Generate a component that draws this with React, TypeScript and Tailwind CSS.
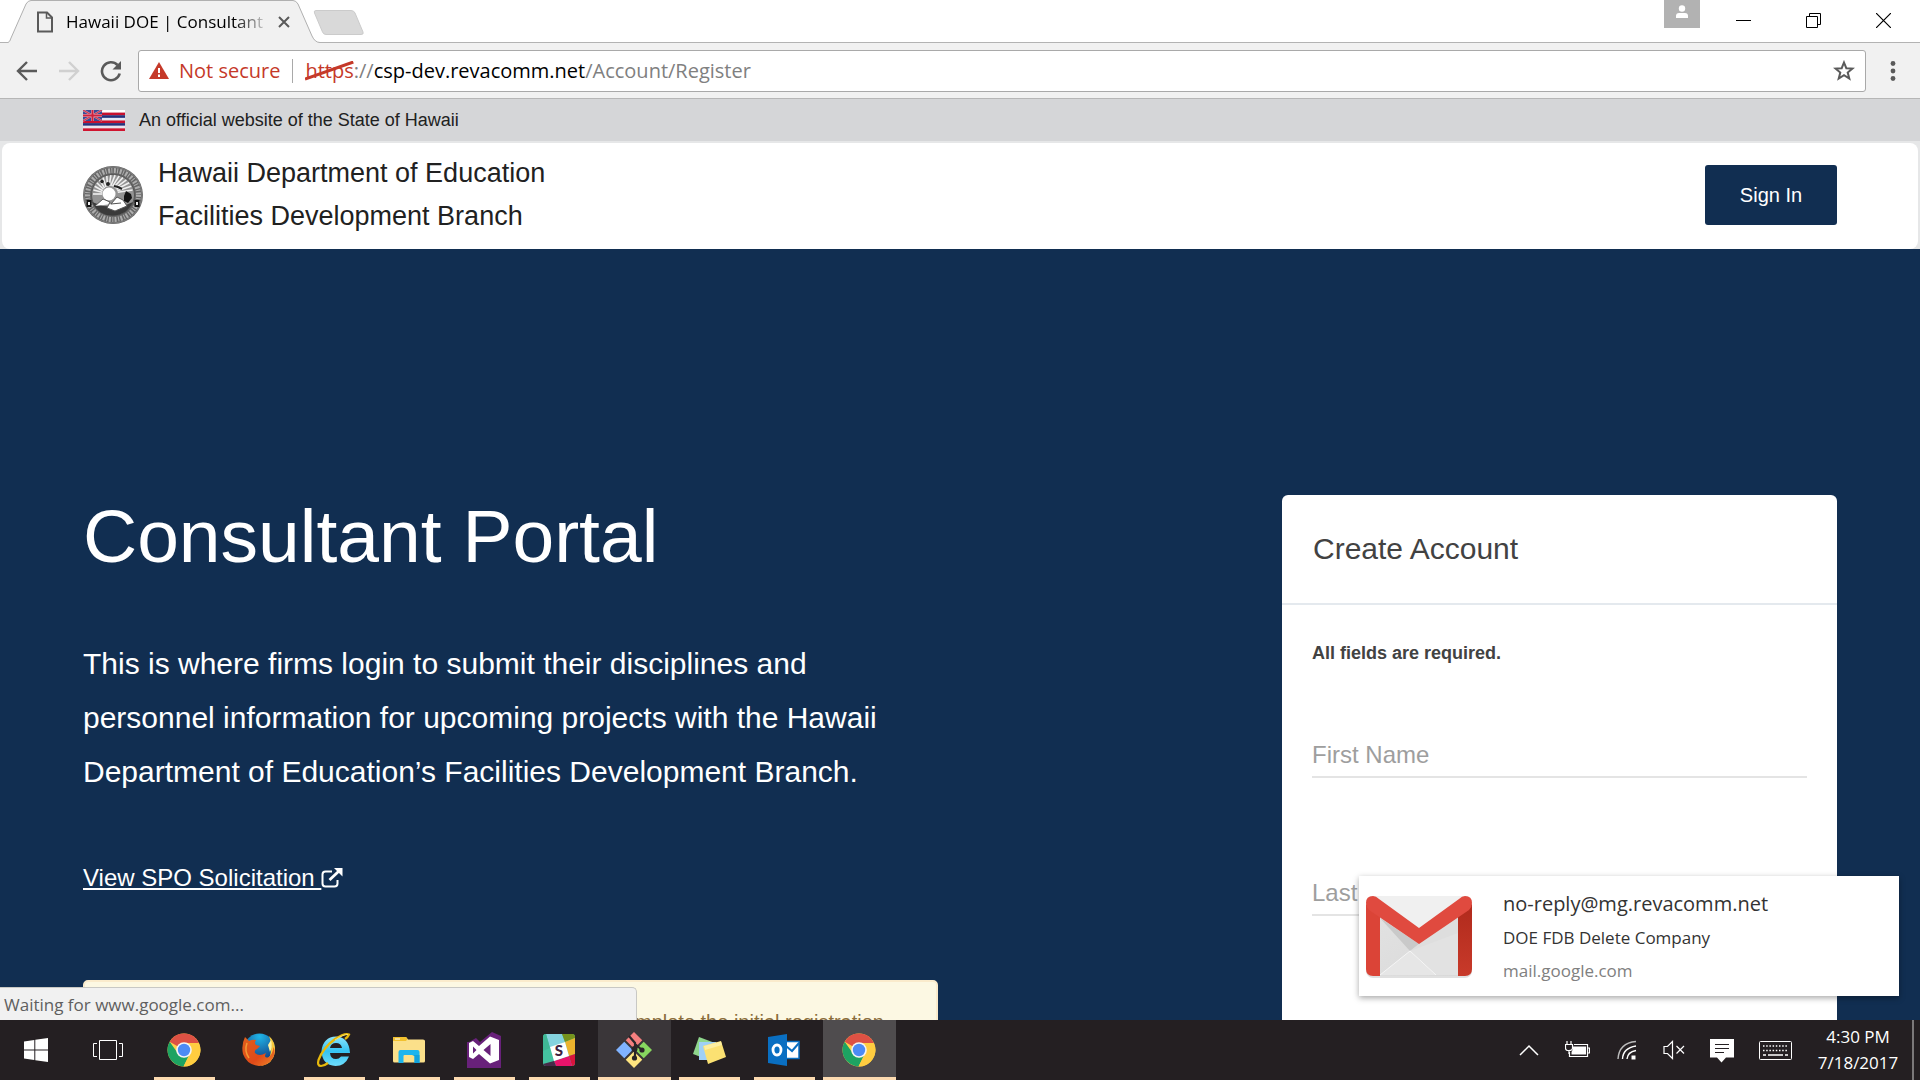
import React from "react";

const ui = "font-['Open_Sans','Noto_Sans',sans-serif]";

function TabStrip() {
  return (
    <div className="flex h-[43px] shrink-0 items-start justify-between bg-white shadow-[inset_0_-1px_0_#b3b3b3]">
      <div className="flex">
        <div className="relative ml-2 flex h-[43px] w-[312px] items-center">
          <svg className="absolute inset-0 h-full w-full" viewBox="0 0 312 43" preserveAspectRatio="none" aria-hidden="true">
            <path d="M0 43V42.5Q2 42 3 38L18 4Q20 .5 23 .5H285Q288 .5 290 4L304 36Q308 42.500 312 42.500V43Z" fill="#f1f1f1" />
            <path d="M0 42.500Q2 42 3 38L18 4Q20 .5 23 .5H285Q288 .5 290 4L304 36Q307 42.500 312 42.500" fill="none" stroke="#b0b0b0" />
          </svg>
          <svg className="relative ml-7 shrink-0" width="18" height="22" viewBox="0 0 18 22" fill="none" stroke="#5a5a5a" strokeWidth="2" aria-hidden="true">
            <path d="M2 1.500H11L16 6.500V20.500H2Z" />
            <path d="M10.500 1.500V7H16" strokeWidth="1.500" />
          </svg>
          <span className="relative ml-3 whitespace-nowrap bg-gradient-to-r from-black from-85% to-black/20 bg-clip-text text-[17px] leading-6 text-transparent">
            Hawaii DOE | Consultant
          </span>
          <button aria-label="Close tab" className="absolute right-[26px] top-3 flex h-5 w-5 items-center justify-center">
            <svg width="12" height="12" viewBox="0 0 12 12" stroke="#5a5a5a" strokeWidth="2" aria-hidden="true">
              <path d="M1 1L11 11M11 1L1 11" />
            </svg>
          </button>
        </div>
        <button aria-label="New tab" className="-ml-2 mt-[9px] h-7">
          <svg width="54" height="28" viewBox="0 0 54 28" aria-hidden="true">
            <path d="M4 1.500H39Q42 1.500 43 4L51 23Q52 25.500 49 25.500H14Q11.500 25.500 10.500 23L2.500 4Q1.500 1.500 4 1.500Z" fill="#d9d9d9" stroke="#cbcbcb" />
          </svg>
        </button>
      </div>
      <div className="flex items-start">
        <button aria-label="Profile" className="flex h-7 w-9 items-start justify-center bg-[#b2b2b2] pt-[5px]">
          <svg width="14" height="14" viewBox="0 0 14 14" fill="#fff" aria-hidden="true">
            <circle cx="7" cy="3.500" r="3.200" />
            <path d="M1 13V11Q1 8 4 8H10Q13 8 13 11V13Z" />
          </svg>
        </button>
        <button aria-label="Minimize" className="ml-2 flex h-[41px] w-[71px] items-center justify-center">
          <svg width="15" height="15" viewBox="0 0 15 15" stroke="#000" aria-hidden="true"><path d="M0 7.500H15" /></svg>
        </button>
        <button aria-label="Restore" className="flex h-[41px] w-[68px] items-center justify-center">
          <svg width="15" height="15" viewBox="0 0 15 15" fill="none" stroke="#000" aria-hidden="true">
            <path d="M.5 3.500H11.500V14.500H.5ZM3.500 3.500V.5H14.500V11.500H11.500" />
          </svg>
        </button>
        <button aria-label="Close" className="flex h-[41px] w-[73px] items-center justify-center">
          <svg width="15" height="15" viewBox="0 0 15 15" stroke="#000" strokeWidth="1.200" aria-hidden="true"><path d="M0 0L15 15M15 0L0 15" /></svg>
        </button>
      </div>
    </div>
  );
}

function Toolbar() {
  return (
    <div className="flex h-14 shrink-0 items-center border-b border-[#b6b6b6] bg-[#f1f1f1] pl-4 pr-6">
      <button aria-label="Back">
        <svg width="22" height="20" viewBox="0 0 22 20" fill="none" stroke="#5a5a5a" strokeWidth="2.400" aria-hidden="true">
          <path d="M21 10H2.500M11 1L2 10L11 19" />
        </svg>
      </button>
      <button aria-label="Forward" disabled className="ml-5">
        <svg width="22" height="20" viewBox="0 0 22 20" fill="none" stroke="#d0d0d0" strokeWidth="2.400" aria-hidden="true">
          <path d="M1 10H19.500M11 1L20 10L11 19" />
        </svg>
      </button>
      <button aria-label="Reload" className="ml-5">
        <svg width="22" height="22" viewBox="0 0 22 22" aria-hidden="true">
          <path d="M17.500 5A9 9 0 1 0 19.700 13.500" fill="none" stroke="#5a5a5a" strokeWidth="2.600" />
          <path d="M21 1V9.500H12.500Z" fill="#5a5a5a" />
        </svg>
      </button>
      <div className="ml-4 flex h-[42px] flex-1 items-center rounded-[3px] border border-[#a9a9a9] bg-white px-[10px] text-xl">
        <svg width="20" height="17" viewBox="0 0 20 17" aria-hidden="true">
          <path d="M10 0L20 17H0Z" fill="#c53929" />
          <path d="M10 6V11M10 12.500V15" stroke="#fff" strokeWidth="2" />
        </svg>
        <span className="ml-2.5 whitespace-nowrap text-[#c53929]">Not secure</span>
        <span className="mx-3 h-6 w-px bg-[#a9a9a9]" />
        <span className="whitespace-nowrap text-[#808080]">
          <span className="relative text-[#c53929]">
            https
            <svg className="absolute left-0 top-1 h-5 w-full" viewBox="0 0 47 20" preserveAspectRatio="none" stroke="#c53929" strokeWidth="3" aria-hidden="true">
              <path d="M0 18L47 1" />
            </svg>
          </span>
          ://<span className="text-black">csp-dev.revacomm.net</span>/Account/Register
        </span>
        <button aria-label="Bookmark this page" className="ml-auto">
          <svg width="22" height="21" viewBox="0 0 22 21" fill="none" stroke="#5a5a5a" strokeWidth="2" aria-hidden="true">
            <path d="M11 2.500L13.300 8.200L19.500 8.600L14.700 12.500L16.300 18.500L11 15.200L5.700 18.500L7.300 12.500L2.500 8.600L8.700 8.200Z" />
          </svg>
        </button>
      </div>
      <button aria-label="Menu" className="ml-6">
        <svg width="6" height="20" viewBox="0 0 6 20" fill="#5a5a5a" aria-hidden="true">
          <circle cx="3" cy="2.500" r="2.400" /><circle cx="3" cy="10" r="2.400" /><circle cx="3" cy="17.500" r="2.400" />
        </svg>
      </button>
    </div>
  );
}

function Flag() {
  const stripes = ["#ffffff", "#c8102e", "#24327c", "#e4e8f4", "#c8102e", "#24327c", "#e9e4ee", "#d0142f"];
  return (
    <svg width="42" height="21" viewBox="0 0 42 21" role="img" aria-label="Flag of Hawaii">
      {stripes.map((c, i) => (
        <rect key={i} x="0" y={i * 2.625} width="42" height="2.700" fill={c} />
      ))}
      <rect width="19" height="11" fill="#3a4a96" />
      <path d="M0 0L19 11M19 0L0 11" stroke="#c9a9c4" strokeWidth="2" />
      <path d="M0 0L19 11M19 0L0 11" stroke="#d03a50" strokeWidth="1.200" />
      <path d="M9.500 0V11M0 5.500H19" stroke="#d9b4c8" strokeWidth="3" />
      <path d="M9.500 0V11M0 5.500H19" stroke="#d0203c" strokeWidth="2" />
    </svg>
  );
}

function Seal() {
  return (
    <svg width="60" height="58" viewBox="0 0 60 58" role="img" aria-label="Department of Education seal">
      <ellipse cx="30" cy="29" rx="30" ry="29" fill="#666" />
      <ellipse cx="30" cy="29" rx="25.500" ry="24.500" fill="none" stroke="#adadad" strokeWidth="5" strokeDasharray="2 1.300 1 1.600" />
      <ellipse cx="30" cy="29" rx="29" ry="28" fill="none" stroke="#808080" strokeWidth="1" />
      <ellipse cx="30" cy="29" rx="21.500" ry="20.500" fill="#949494" stroke="#555" strokeWidth="1" />
      <g stroke="#f0f0f0" strokeWidth="1.600">
        {[180, 192, 204, 216, 228, 240, 252, 264, 276, 288, 300, 312, 324, 336, 348].map((a) => (
          <path key={a} d={`M${(27 + 8 * Math.cos((a * Math.PI) / 180)).toFixed(1)} ${(28 + 8 * Math.sin((a * Math.PI) / 180)).toFixed(1)}L${(30 + 20 * Math.cos((a * Math.PI) / 180)).toFixed(1)} ${(28 + 19 * Math.sin((a * Math.PI) / 180)).toFixed(1)}`} />
        ))}
      </g>
      <circle cx="26" cy="28" r="6.500" fill="#fff" />
      <path d="M9 36Q16 50 30 49.500Q44 49 50 36L38 41L20 40Z" fill="#3a3a3a" />
      <path d="M12 40L20 33L27 36L24 42L32 45L44 40L40 34L34 31L28 38L38 37" fill="#fff" stroke="#555" strokeWidth="1" />
      <path d="M41 30L43 25L48 28L49 32L45 37L41 35Z" fill="#151515" />
      <circle cx="19" cy="15.500" r="1.800" fill="#222" />
      <circle cx="25" cy="18" r="2" fill="#222" />
      <path d="M31 20L35 21L39 23" stroke="#222" strokeWidth="2" />
      <rect x="3.500" y="34" width="5" height="7" fill="#111" /><rect x="5" y="36" width="2" height="3" fill="#eee" />
      <rect x="51.500" y="34" width="5" height="7" fill="#111" /><rect x="53" y="36" width="2" height="3" fill="#eee" />
    </svg>
  );
}

function SiteHeader() {
  return (
    <>
      <div className="flex h-[42px] items-center bg-[#d5d6d8] px-[83px] text-lg text-[#212121]">
        <Flag />
        <span className="ml-3.5">An official website of the State of Hawaii</span>
      </div>
      <header className="bg-[#e6e7e8] px-0.5 pt-0.5">
        <div className="flex h-[106px] items-center justify-between rounded-lg bg-white px-[81px] pb-0.5">
          <div className="flex items-center gap-[15px]">
            <Seal />
            <p className="text-[27px] leading-[43px] text-[#212121]">
              Hawaii Department of Education
              <br />
              Facilities Development Branch
            </p>
          </div>
          <button className="h-[60px] w-[132px] rounded-[3px] bg-[#112e51] text-xl text-white">Sign In</button>
        </div>
      </header>
    </>
  );
}

function Hero() {
  return (
    <main className="flex items-start justify-between bg-[#112e51] px-[83px] pt-[246px]">
      <section className="max-w-[855px] flex-1 text-white">
        <h1 className="text-[75px] leading-[82px]">Consultant Portal</h1>
        <p className="mt-[60px] text-3xl leading-[54px]">
          This is where firms login to submit their disciplines and personnel information for upcoming projects with the Hawaii Department of
          Education’s Facilities Development Branch.
        </p>
        <a href="#solicitation" className="mt-[61px] flex items-center text-2xl leading-9">
          <span className="whitespace-pre underline decoration-2 underline-offset-2">View SPO Solicitation </span>
          <svg width="22" height="20" viewBox="0 0 22 20" fill="none" stroke="#fff" strokeWidth="2" aria-hidden="true">
            <path d="M11 3.500H4.500Q1.500 3.500 1.500 6.500V15.500Q1.500 18.500 4.500 18.500H13.500Q16.500 18.500 16.500 15.500V12" />
            <path d="M8.500 12L18 3" strokeWidth="2.800" />
            <path d="M13 0H21.500V8.500Z" fill="#fff" stroke="none" />
          </svg>
        </a>
        <div role="alert" className="mt-[84px] h-40 rounded-[5px] border-2 border-[#faebcc] bg-[#fcf8e3] px-[52px] pt-[26px] text-right text-xl text-[#8a6d3b]">
          Please complete the initial registration
        </div>
      </section>
      <form className="h-[700px] w-[555px] rounded-md bg-white text-[#424242]">
        <h2 className="border-b-2 border-[#e4e9ee] px-[31px] text-3xl leading-[108px]">Create Account</h2>
        <div className="px-[30px] pt-[34px]">
          <p className="mb-[67px] text-lg font-bold leading-7">All fields are required.</p>
          <input aria-label="First Name" placeholder="First Name" className="mb-[94px] block h-11 w-full border-b-2 border-[#e4e4e4] text-2xl placeholder:text-[#9e9e9e]" />
          <input aria-label="Last Name" placeholder="Last Name" className="block h-11 w-full border-b-2 border-[#e4e4e4] text-2xl placeholder:text-[#9e9e9e]" />
        </div>
      </form>
    </main>
  );
}

function GmailIcon() {
  return (
    <svg width="110" height="86" viewBox="0 0 110 86" aria-hidden="true">
      <defs>
        <linearGradient id="gmPaper" x1="0" y1="0" x2="1" y2="1">
          <stop offset="0" stopColor="#e4e4e4" /><stop offset="1" stopColor="#d8d8d8" />
        </linearGradient>
        <linearGradient id="gmRight" x1="0" y1="0" x2="0" y2="1">
          <stop offset="0" stopColor="#b02a1c" /><stop offset="1" stopColor="#c83a2a" />
        </linearGradient>
      </defs>
      <rect x="2" y="5" width="106" height="80" rx="7" fill="#000" opacity=".12" />
      <rect x="2" y="3" width="106" height="80" rx="7" fill="url(#gmPaper)" />
      <path d="M8 3H102L55 39Z" fill="#f0f0f0" />
      <path d="M16 82L46 58L72 82H16Z" fill="#e6e6e6" />
      <path d="M46 58L16 25L55 51Z" fill="#c9c9c9" />
      <path d="M46 58L94 82V21L55 51Z" fill="#dedede" />
      <path d="M46 58L72 82H94V40Z" fill="#e2e2e2" />
      <path d="M16 82L46 58L72 82" fill="none" stroke="#f6f6f6" strokeWidth="1" />
      <path d="M2 11L16 21V83H9Q2 83 2 76Z" fill="#db4437" />
      <path d="M108 11L94 21V83H101Q108 83 108 76Z" fill="url(#gmRight)" />
      <path d="M2 10Q2 3 9 3Q12 3 15 6L55 35L95 6Q98 3 101 3Q108 3 108 10Q108 14 105 17L55 51L5 17Q2 14 2 10Z" fill="#e04a3f" />
    </svg>
  );
}

function Toast() {
  return (
    <div className={`absolute bottom-6 right-[21px] flex h-[120px] w-[540px] items-center bg-white pl-[5px] shadow-[0_2px_6px_rgba(0,0,0,0.35)] ${ui}`}>
      <GmailIcon />
      <div className="ml-[29px] pt-0.5">
        <p className="text-xl leading-[34px] text-[#333]">no-reply@mg.revacomm.net</p>
        <p className="text-[17px] leading-[33px] text-[#333]">DOE FDB Delete Company</p>
        <p className="text-[17px] leading-[33px] text-[#808080]">mail.google.com</p>
      </div>
    </div>
  );
}

function ChromeIcon() {
  return (
    <svg width="34" height="34" viewBox="0 0 34 34" aria-hidden="true">
      <circle cx="17" cy="17" r="16.500" fill="#ffd04b" />
      <path d="M17 17L2.700 8.700A16.500 16.500 0 0 1 31.900 10H17Z" fill="#dd5144" />
      <path d="M2.700 8.700L11 20.500L17 24.500L22.500 21L16.500 33.500A16.500 16.500 0 0 1 2.700 8.700Z" fill="#1da362" />
      <path d="M31.900 10A16.500 16.500 0 0 1 16.500 33.500L23.500 20.500L22 10Z" fill="#ffcd40" />
      <circle cx="17" cy="17" r="7.800" fill="#f4f4f4" />
      <circle cx="17" cy="17" r="6.200" fill="#4c8bf5" />
    </svg>
  );
}

function FirefoxIcon() {
  return (
    <svg width="34" height="34" viewBox="0 0 34 34" aria-hidden="true">
      <defs>
        <radialGradient id="fxBlue" cx=".5" cy=".1" r=".8"><stop offset="0" stopColor="#1fb5e8" /><stop offset="1" stopColor="#143c80" /></radialGradient>
        <linearGradient id="fxFox" x1="0" y1="0" x2="1" y2="1"><stop offset="0" stopColor="#e0601c" /><stop offset=".6" stopColor="#e04a18" /><stop offset="1" stopColor="#f0862a" /></linearGradient>
      </defs>
      <circle cx="17.500" cy="16" r="15.500" fill="url(#fxBlue)" />
      <path d="M27 3Q34 9 33 19Q31 31 19 33L28 23Q31 12 27 3Z" fill="#f9c93c" />
      <path d="M29 7Q31 14 28 19L26 12Z" fill="#fff2a0" />
      <path d="M3 4L7 8Q11 6 14 7Q12 10 14 12L18 13L15 16Q12 17 13 20Q17 24 24 20Q21 26 27 24Q31 20 31.500 14Q34 20 31 25Q26 33 17 33Q5 32 1 21Q-1 12 3 4Z" fill="url(#fxFox)" />
      <path d="M5 10Q2 18 7 25" stroke="#f49a35" strokeWidth="1.500" fill="none" />
    </svg>
  );
}

function IEIcon() {
  return (
    <svg width="36" height="36" viewBox="0 0 36 36" aria-hidden="true">
      <defs><linearGradient id="ieBlue" x1="0" y1="0" x2="0" y2="1"><stop offset="0" stopColor="#8be4fc" /><stop offset=".5" stopColor="#35c3f3" /><stop offset="1" stopColor="#6fdcfb" /></linearGradient></defs>
      <path d="M34 21H14Q14.500 27 20 27Q23 27 25 24.500H33Q29 34 19.500 34Q6 33 5.500 19Q7 5 20 4.500Q33 5 34 21ZM14 16H26Q25 11 20 11Q15 11 14 16Z" fill="url(#ieBlue)" />
      <path d="M29 7Q32 5 33 2.500Q29 .5 19 7Q7 16 2.500 28Q1 34 5 34Q8 34 12 31" fill="none" stroke="#e8b90c" strokeWidth="2.200" />
      <path d="M32 2.500Q28 2 19 8" fill="none" stroke="#fce56b" strokeWidth="1" />
    </svg>
  );
}

function ExplorerIcon() {
  return (
    <svg width="34" height="28" viewBox="0 0 34 28" aria-hidden="true">
      <path d="M1 2Q1 1 2 1H14L16 3.500H31Q33 3.500 33 5V25Q33 26.500 31.500 26.500H2.500Q1 26.500 1 25Z" fill="#fbe08a" />
      <path d="M1 2Q1 1 2 1H14L15.500 3L14 5H1Z" fill="#f2c12e" />
      <path d="M3 3H8" stroke="#fff" strokeWidth="1" />
      <path d="M6.500 27V16Q6.500 14 8.500 14H25.500Q27.500 14 27.500 16V27H22.500V20Q22.500 19 21.500 19H12.500Q11.500 19 11.500 20V27Z" fill="#1cb5ee" />
      <path d="M20 19H27.500V27H22.500V20Z" fill="#12a2dd" />
    </svg>
  );
}

function VSIcon() {
  return (
    <svg width="36" height="36" viewBox="0 0 36 36" aria-hidden="true">
      <path d="M3 10L10 6L14 10L26 0L35 4V36H1V10Z" fill="#68217a" />
      <path d="M24 4.500L33 8V28L24 31.500L13 22L7 27L3 25V11L7 9L13 14ZM7 14.500V21.500L10.500 18ZM24.500 12L17.500 18L24.500 24Z" fill="#fff" fillRule="evenodd" />
    </svg>
  );
}

function SlackIcon() {
  return (
    <svg width="32" height="32" viewBox="0 0 32 32" aria-hidden="true">
      <defs><clipPath id="slackBox"><rect width="32" height="32" rx="3" /></clipPath></defs>
      <g clipPath="url(#slackBox)">
        <rect width="32" height="32" fill="#44c2a0" />
        <path d="M3 0H19L22 8L7 14Z" fill="#85d3de" />
        <path d="M0 0H3L7 14L0 17Z" fill="#3fb795" />
        <path d="M19 0H32V4L22 8Z" fill="#75921c" />
        <path d="M22 8L32 4V20L26 22Z" fill="#ecb32d" />
        <path d="M26 22L32 20V32H29Z" fill="#d8143c" />
        <path d="M11 27L26 22L29 32H13Z" fill="#e8136b" />
        <path d="M0 30L11 27L13 32H0Z" fill="#472a49" />
        <path d="M7 13L22 8L26 22L11 27Z" fill="#fff" />
      </g>
      <text x="16" y="22" textAnchor="middle" fontFamily="Lato, sans-serif" fontWeight="900" fontSize="15" fill="#3d1f40">S</text>
    </svg>
  );
}

function GitIcon() {
  return (
    <svg width="36" height="36" viewBox="0 0 36 36" aria-hidden="true">
      <path d="M18 0L27 9L18 18L9 9Z" fill="#f57f7f" />
      <path d="M9 9L18 18L9 27L0 18Z" fill="#80b3ff" />
      <path d="M27 9L36 18L27 27L18 18Z" fill="#87d75f" />
      <path d="M18 18L27 27L18 36L9 27Z" fill="#ffe680" />
      <path d="M8 8L28 28M28 8L8 28" stroke="#3a3639" strokeWidth="2" />
      <path d="M13 4L19 11V26M19 12L26 18" stroke="#2a2528" strokeWidth="2.200" fill="none" />
      <circle cx="18.500" cy="17" r="3" fill="#2a2528" /><circle cx="26" cy="18" r="2.600" fill="#2a2528" /><circle cx="18.500" cy="26" r="2.600" fill="#2a2528" />
    </svg>
  );
}

function NotesIcon() {
  return (
    <svg width="34" height="28" viewBox="0 0 34 28" aria-hidden="true">
      <path d="M7 1L23 7L17 24L1 18Z" fill="#8fd68d" />
      <path d="M7 6H24V24H7Z" fill="#9fd0f5" />
      <path d="M11 10L29 5L34 21L16 28Z" fill="#fbe172" />
      <path d="M12 10L29 5.500L30 9L13 14Z" fill="#fdeea0" />
    </svg>
  );
}

function OutlookIcon() {
  return (
    <svg width="34" height="34" viewBox="0 0 34 34" aria-hidden="true">
      <path d="M17 8.500H32V25.500H17Z" fill="#fff" stroke="#0a6fc2" strokeWidth="1.500" />
      <path d="M19 13L25 18L32 10" fill="none" stroke="#0a6fc2" strokeWidth="2" />
      <path d="M1 4L20 1V33L1 30Z" fill="#0a6fc2" />
      <ellipse cx="10" cy="17" rx="4" ry="5" fill="none" stroke="#fff" strokeWidth="2.800" />
    </svg>
  );
}

const apps: { name: string; icon: React.ReactNode; state: "idle" | "open" | "hover" | "active" }[] = [
  { name: "Google Chrome", icon: <ChromeIcon />, state: "open" },
  { name: "Firefox", icon: <FirefoxIcon />, state: "idle" },
  { name: "Internet Explorer", icon: <IEIcon />, state: "open" },
  { name: "File Explorer", icon: <ExplorerIcon />, state: "open" },
  { name: "Visual Studio", icon: <VSIcon />, state: "open" },
  { name: "Slack", icon: <SlackIcon />, state: "open" },
  { name: "Git", icon: <GitIcon />, state: "hover" },
  { name: "Sticky Notes", icon: <NotesIcon />, state: "open" },
  { name: "Outlook", icon: <OutlookIcon />, state: "open" },
  { name: "Google Chrome window", icon: <ChromeIcon />, state: "active" },
];

const stateClass = {
  idle: "border-transparent",
  open: "border-transparent before:absolute before:inset-x-1.5 before:-bottom-[3px] before:h-[3px] before:bg-[#fcdab0]",
  hover: "border-[#fcdab0] bg-[#3a3639]",
  active: "border-[#fcdab0] bg-[#4f4c4e]",
};

function Taskbar() {
  return (
    <footer className={`flex h-[60px] shrink-0 items-stretch justify-between bg-[#241f22] text-white ${ui}`}>
      <div className="flex items-stretch">
        <button aria-label="Start" className="flex w-[72px] items-center justify-center">
          <svg width="24" height="24" viewBox="0 0 24 24" fill="#fff" aria-hidden="true">
            <path d="M0 3.500L10.300 2V11.500H0ZM11.300 1.800L24 0V11.500H11.300ZM0 12.500H10.300V22L0 20.500ZM11.300 12.500H24V24L11.300 22.200Z" />
          </svg>
        </button>
        <button aria-label="Task view" className="mr-1 flex w-[72px] items-center justify-center">
          <svg width="30" height="20" viewBox="0 0 30 20" fill="none" stroke="#fff" aria-hidden="true">
            <path d="M6.500 .5H23.500V19.500H6.500ZM4 3.500H.5V16.500H4M26 3.500H29.500V16.500H26" />
          </svg>
        </button>
        <div className="flex items-stretch gap-0.5">
          {apps.map((app) => (
            <button key={app.name} aria-label={app.name} className={`relative flex w-[73px] items-center justify-center border-b-[3px] pr-px pt-0.5 ${stateClass[app.state]}`}>
              {app.icon}
            </button>
          ))}
        </div>
      </div>
      <div className="flex items-center">
        <button aria-label="Show hidden icons" className="mr-[26px]">
          <svg width="20" height="12" viewBox="0 0 20 12" fill="none" stroke="#fff" strokeWidth="1.500" aria-hidden="true"><path d="M1 11L10 2L19 11" /></svg>
        </button>
        <button aria-label="Battery" className="mr-[27px]">
          <svg width="25" height="20" viewBox="0 0 25 20" fill="none" stroke="#fff" aria-hidden="true">
            <path d="M9 4.500H22.500V16.500H4.500V12M23 8H24.500V13H23" strokeWidth="1.200" />
            <path d="M8 6.500H21V14.500H6.500V12L8 9Z" fill="#fff" stroke="none" />
            <path d="M.5 4.500H7.500V8Q7.500 10.500 4 10.500Q.5 10.500 .5 8ZM2 4V1M6 4V1M4 10V14" fill="#241f22" strokeWidth="1.200" />
          </svg>
        </button>
        <button aria-label="Wi-Fi" className="mr-[26px]">
          <svg width="20" height="20" viewBox="0 0 20 20" fill="none" stroke="#fff" strokeWidth="1.400" aria-hidden="true">
            <path d="M1 19Q2 3 19 1.500" stroke="#bbb" /><path d="M5.500 19Q6 8 19 6" /><path d="M10 19Q10.500 12 19 10.500" />
            <path d="M14.500 15.500H18.500V19.500H14.500Z" fill="#fff" stroke="none" />
          </svg>
        </button>
        <button aria-label="Muted" className="mr-[25px]">
          <svg width="22" height="20" viewBox="0 0 22 20" fill="none" stroke="#fff" strokeWidth="1.200" aria-hidden="true">
            <path d="M1 6.500H4.500L9.500 1.500V18.500L4.500 13.500H1ZM13.500 6L21 13.500M21 6L13.500 13.500" />
          </svg>
        </button>
        <button aria-label="Notifications" className="mr-[25px]">
          <svg width="24" height="25" viewBox="0 0 24 25" aria-hidden="true">
            <path d="M0 1H24V19.500H16L11.500 24.500L7 19.500H0Z" fill="#fff" />
            <path d="M5 6.500H19M5 10.500H19M5 14.500H14" stroke="#241f22" strokeWidth="1.200" />
          </svg>
        </button>
        <button aria-label="Touch keyboard" className="mr-5">
          <svg width="33" height="19" viewBox="0 0 33 19" fill="none" stroke="#fff" aria-hidden="true">
            <rect x=".5" y=".5" width="32" height="18" rx="1" />
            <path d="M4 5H29M4 9.500H29" strokeWidth="1.500" strokeDasharray="1.500 1.700" /><path d="M4 14H7M9 14H24M26 14H29" strokeWidth="1.500" />
          </svg>
        </button>
        <div className="w-[92px] text-center text-[17px] leading-[26px]">
          <p>4:30 PM</p>
          <p>7/18/2017</p>
        </div>
        <span className="ml-2 mr-1.5 h-full w-0.5 bg-[#7b787a]" />
      </div>
    </footer>
  );
}

export default function App() {
  return (
    <div className="flex h-screen flex-col overflow-hidden bg-white font-['Liberation_Sans',Arial,sans-serif]">
      <div className={`flex shrink-0 flex-col ${ui}`}>
        <TabStrip />
        <Toolbar />
      </div>
      <div className="relative min-h-0 flex-1 overflow-hidden">
        <SiteHeader />
        <Hero />
        <div className={`absolute bottom-0 left-0 h-[33px] w-[637px] rounded-tr-[5px] border-r border-t border-[#c8c8c4] bg-[#f1f1f1] pl-1 text-[17px] leading-[34px] text-[#5f5f5f] ${ui}`}>
          Waiting for www.google.com...
        </div>
        <Toast />
      </div>
      <Taskbar />
    </div>
  );
}
